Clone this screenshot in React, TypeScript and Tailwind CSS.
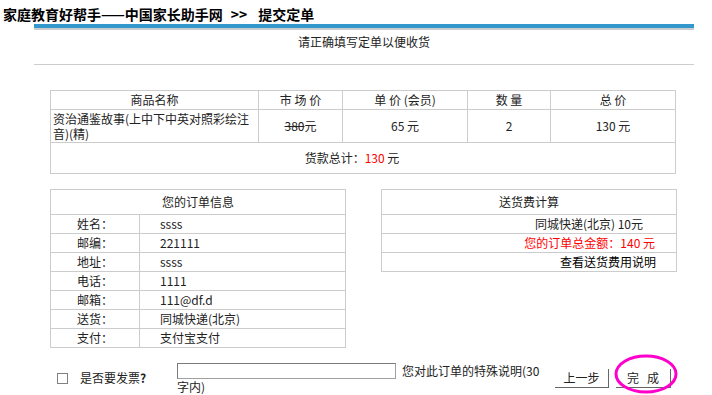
import React from "react";

const font = { fontFamily: '"Noto Sans CJK SC", "Liberation Sans", sans-serif' };

const orderInfo = [
  { label: "姓名：", value: "ssss" },
  { label: "邮编：", value: "221111" },
  { label: "地址：", value: "ssss" },
  { label: "电话：", value: "1111" },
  { label: "邮箱：", value: "111@df.d" },
  { label: "送货：", value: "同城快递(北京)" },
  { label: "支付：", value: "支付宝支付" },
];

const cell = "border border-[#cccccc] p-0";

const App: React.FC = () => {
  return (
    <div
      className="w-[712px] h-[395px] bg-white overflow-hidden text-[12px] leading-[12px] text-[#222]"
      style={font}
    >
      {/* Title */}
      <h1 className="pl-[3px] pt-[7px] text-[14px] leading-[14px] font-bold text-black whitespace-nowrap">
        家庭教育好帮手——中国家长助手网
        <span className="ml-[8px] mr-[11px]">&gt;&gt;</span>
        提交定单
      </h1>

      <div className="ml-[34px] w-[660px]">
        <div className="mt-[3px] h-[4px] bg-[#3399cc]" />
        <div className="h-[2px] bg-[#cccccc]" />

        <p className="mt-[6px] text-center leading-[12px]">请正确填写定单以便收货</p>
        <div className="mt-[16px] border-t border-[#cccccc]" />

        <div className="px-[16px] pt-[25px]">
          {/* Goods table */}
          <table className="w-[626px] border-collapse table-fixed">
            <colgroup>
              <col className="w-[208px]" />
              <col className="w-[84px]" />
              <col className="w-[125px]" />
              <col className="w-[83px]" />
              <col className="w-[125px]" />
            </colgroup>
            <tbody>
              <tr className="h-[19px] text-center">
                <td className={cell}>商品名称</td>
                <td className={cell}>市 场 价</td>
                <td className={cell}>单 价 (会员)</td>
                <td className={cell}>数 量</td>
                <td className={cell}>总 价</td>
              </tr>
              <tr className="h-[33px] text-center">
                <td className={`${cell} text-left pl-[2px] leading-[15px]`}>
                  资治通鉴故事(上中下中英对照彩绘注音)(精)
                </td>
                <td className={cell}>
                  <span className="line-through">380</span>元
                </td>
                <td className={cell}>65 元</td>
                <td className={cell}>2</td>
                <td className={cell}>130 元</td>
              </tr>
              <tr className="h-[31px]">
                <td colSpan={5} className={`${cell} text-center pr-[22px]`}>
                  货款总计：<span className="text-[#ff0000]">130</span> 元
                </td>
              </tr>
            </tbody>
          </table>

          {/* Info tables */}
          <div className="mt-[15px] flex justify-between">
            <table className="w-[296px] border-collapse table-fixed">
              <colgroup>
                <col className="w-[89px]" />
                <col className="w-[206px]" />
              </colgroup>
              <tbody>
                <tr className="h-[25px]">
                  <td colSpan={2} className={`${cell} text-center`}>
                    您的订单信息
                  </td>
                </tr>
                {orderInfo.map((row) => (
                  <tr key={row.label} className="h-[19px]">
                    <td className={`${cell} text-center`}>{row.label}</td>
                    <td className={`${cell} pl-[20px]`}>{row.value}</td>
                  </tr>
                ))}
              </tbody>
            </table>

            <table className="w-[296px] self-start border-collapse table-fixed -ml-[2px] mr-[1px]">
              <tbody>
                <tr className="h-[25px]">
                  <td className={`${cell} text-center`}>送货费计算</td>
                </tr>
                <tr className="h-[19px]">
                  <td className={`${cell} text-right pr-[33px]`}>同城快递(北京) 10元</td>
                </tr>
                <tr className="h-[19px]">
                  <td className={`${cell} text-right pr-[21px] text-[#ff0000]`}>
                    您的订单总金额：140 元
                  </td>
                </tr>
                <tr className="h-[19px]">
                  <td className={`${cell} text-right pr-[20px] text-black`}>查看送货费用说明</td>
                </tr>
              </tbody>
            </table>
          </div>
        </div>

        {/* Bottom form */}
        <div className="mt-[15px] flex items-start">
          <div className="ml-[23px] mt-[10px] w-[11px] h-[11px] border border-[#808080] bg-white" />
          <span className="ml-[12px] mt-[9px] w-[97px]">
            是否要发票<b className="font-bold">?</b>
          </span>
          <div className="w-[370px] leading-[16px]">
            <input
              type="text"
              className="align-top w-[219px] h-[16px] border border-[#a0a0a0] border-t-[#7a7a7a] border-l-[#7a7a7a] bg-white outline-none"
            />
            <span className="ml-[6px]">您对此订单的特殊说明(30字内)</span>
          </div>
          <button className="ml-[8px] mt-[6px] w-[54px] h-[19px] bg-white border-r border-b border-[#666666] text-[12px] leading-[12px] text-[#222]">
            上一步
          </button>
          <div className="relative ml-[7px] mt-[6px]">
            <button className="w-[55px] h-[19px] bg-white border-r border-b border-[#666666] text-[12px] leading-[12px] text-[#222]">
              完&nbsp;&nbsp;&nbsp;成
            </button>
            <svg
              className="absolute left-[-2px] top-[-15px] pointer-events-none"
              width="66"
              height="42"
              viewBox="0 0 66 42"
            >
              <ellipse
                cx="32"
                cy="20"
                rx="30"
                ry="18"
                fill="none"
                stroke="#ff00cc"
                strokeWidth="3"
              />
            </svg>
          </div>
        </div>
      </div>
    </div>
  );
};

export default App;
